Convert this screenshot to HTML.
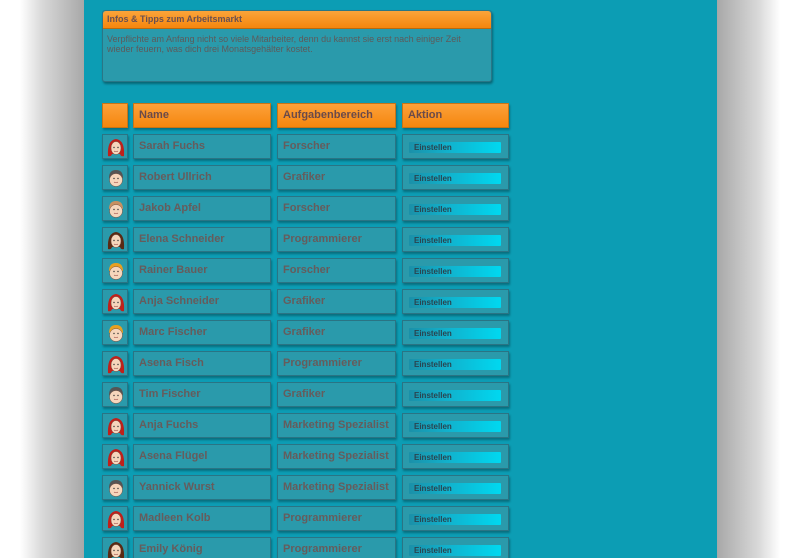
<!DOCTYPE html>
<html><head><meta charset="utf-8"><style>
*{margin:0;padding:0;box-sizing:border-box}
html,body{width:800px;height:558px;overflow:hidden}
body{position:relative;font-family:"Liberation Sans",sans-serif;background:#fff}
.sl{position:absolute;left:20px;top:0;width:64px;height:558px;background:linear-gradient(to right,#fff,#d8d8d8 35%,#a8a8a8)}
.sr{position:absolute;left:717px;top:0;width:63px;height:558px;background:linear-gradient(to left,#fff,#d8d8d8 35%,#a8a8a8)}
.main{position:absolute;left:84px;top:0;width:633px;height:558px;background:#0c9db4}
.info{position:absolute;left:102px;top:10px;width:390px;height:72px;background:#2a9aab;border:1px solid #2a7686;border-radius:3px;box-shadow:1px 2px 2px rgba(0,0,0,.35)}
.ih{height:18px;background:linear-gradient(#fba43a,#f5860d);border-bottom:1px solid #b86a10;border-radius:3px 3px 0 0;font-size:9px;font-weight:bold;color:#6a5050;padding:3px 4px}
.it{font-size:9px;color:#5e5a5a;padding:5px 4px;line-height:10px}
.c{position:absolute;height:25px;border:1px solid #2a7484;background:#2a9aab;box-shadow:1px 2px 2px rgba(0,0,0,.3);font-size:11px;font-weight:bold;color:#665c5c;padding:5px 5px;white-space:nowrap}
.h{background:linear-gradient(#fca13a,#f5860d);border-color:#c77416;color:#6a4a4a}
.b{position:absolute;left:6px;top:7px;width:92px;height:11px;background:linear-gradient(to right,#1b90a8,#10b4cf 45%,#00d8f0);border-radius:1px;font-size:8px;font-weight:bold;color:#2a4450;padding:1px 5px;line-height:9px}
.c svg{position:absolute;left:3px;top:2px}
</style></head><body>
<div class="sl"></div><div class="sr"></div><div class="main"></div>
<div class="info"><div class="ih">Infos &amp; Tipps zum Arbeitsmarkt</div><div class="it">Verpflichte am Anfang nicht so viele Mitarbeiter, denn du kannst sie erst nach einiger Zeit wieder feuern, was dich drei Monatsgehälter kostet.</div></div>
<div class="c h" style="left:102px;top:103px;width:26px"></div>
<div class="c h" style="left:133px;top:103px;width:138px">Name</div>
<div class="c h" style="left:277px;top:103px;width:119px">Aufgabenbereich</div>
<div class="c h" style="left:402px;top:103px;width:107px">Aktion</div>
<div id="rows"></div>
<script>
var d=[["Sarah Fuchs","Forscher","f","#c0201a"],["Robert Ullrich","Grafiker","m","#555"],["Jakob Apfel","Forscher","m","#c89060"],["Elena Schneider","Programmierer","f","#5a2a14"],["Rainer Bauer","Forscher","m","#e8a020"],["Anja Schneider","Grafiker","f","#c0201a"],["Marc Fischer","Grafiker","m","#e8a020"],["Asena Fisch","Programmierer","f","#c0201a"],["Tim Fischer","Grafiker","m","#555"],["Anja Fuchs","Marketing Spezialist","f","#c0201a"],["Asena Flügel","Marketing Spezialist","f","#c0201a"],["Yannick Wurst","Marketing Spezialist","m","#555"],["Madleen Kolb","Programmierer","f","#c0201a"],["Emily König","Programmierer","f","#5a2a14"]];
var h="";
d.forEach(function(r,i){var y=134+i*31;
var f=r[2]=="f";
var hair=f?'<path d="M2 19 Q1 3 10 2 Q19 3 18 19 Q15 20 14 17 L6 17 Q5 20 2 19 Z" fill="'+r[3]+'"/>':'<path d="M3 10 Q3 2 10 2 Q17 2 17 10 Z" fill="'+r[3]+'"/>';
var face=f?'<ellipse cx="10" cy="11" rx="5" ry="6.5" fill="#f6d6bc" stroke="#7a5040" stroke-width=".5"/>':'<ellipse cx="10" cy="12" rx="6.5" ry="6.5" fill="#f6d6bc" stroke="#7a5040" stroke-width=".5"/>';
var svg='<svg width="20" height="20" viewBox="0 0 20 20">'+hair+face+'<circle cx="8" cy="10.5" r=".7" fill="#333"/><circle cx="12" cy="10.5" r=".7" fill="#333"/><path d="M8 14 Q10 15.5 12 14" stroke="#a0504a" stroke-width=".6" fill="none"/></svg>';
h+='<div class="c" style="left:102px;top:'+y+'px;width:26px">'+svg+'</div>';
h+='<div class="c" style="left:133px;top:'+y+'px;width:138px">'+r[0]+'</div>';
h+='<div class="c" style="left:277px;top:'+y+'px;width:119px">'+r[1]+'</div>';
h+='<div class="c" style="left:402px;top:'+y+'px;width:107px"><div class="b">Einstellen</div></div>';});
document.getElementById("rows").innerHTML=h;
</script>
</body></html>
